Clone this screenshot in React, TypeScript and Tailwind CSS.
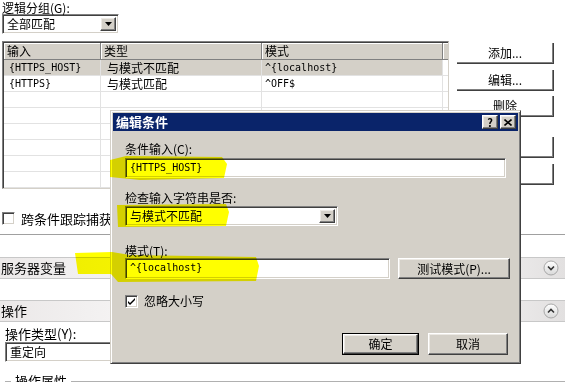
import React from 'react';

const ui = "font-['Noto_Sans_CJK_SC',sans-serif]";
const mono = "font-['DejaVu_Sans_Mono','Noto_Sans_CJK_SC',monospace] text-[10px]";

const raised =
  'border border-t-white border-l-white border-b-[#404040] border-r-[#404040] shadow-[inset_-1px_-1px_0_#808080,inset_1px_1px_0_#ece9e4] bg-[#d4d0c8]';
const sunken =
  'border border-t-[#808080] border-l-[#808080] border-b-white border-r-white shadow-[inset_1px_1px_0_#404040,inset_-1px_-1px_0_#d4d0c8]';

function Arrow() {
  return (
    <svg width="7" height="4" viewBox="0 0 7 4">
      <path d="M0 0h7L3.5 4z" fill="#000" />
    </svg>
  );
}

function Combo({ value, className }: { value: string; className: string }) {
  return (
    <div className={`${sunken} bg-white flex items-stretch p-[2px] ${className}`}>
      <div className="flex-1 pl-[2px] flex items-center whitespace-nowrap">{value}</div>
      <div className={`${raised} w-[16px] flex items-center justify-center`}>
        <Arrow />
      </div>
    </div>
  );
}

function FlatButton({ label }: { label: string }) {
  return (
    <div className="w-[97px] h-[21px] border-r border-b border-[#404040] shadow-[inset_-1px_-1px_0_#808080] bg-white flex items-center justify-center">
      {label}
    </div>
  );
}

function Expander({ up }: { up?: boolean }) {
  return (
    <svg width="16" height="16" viewBox="0 0 16 16">
      <defs>
        <linearGradient id={up ? 'gu' : 'gd'} x1="0" y1="0" x2="0" y2="1">
          <stop offset="0" stopColor="#ffffff" />
          <stop offset="1" stopColor="#d8d8d8" />
        </linearGradient>
      </defs>
      <circle cx="8" cy="8" r="7" fill={`url(#${up ? 'gu' : 'gd'})`} stroke="#a8a8a8" />
      <path
        d={up ? 'M5 9.5L8 6.5L11 9.5' : 'M5 6.5L8 9.5L11 6.5'}
        fill="none"
        stroke="#333"
        strokeWidth="1.6"
      />
    </svg>
  );
}

function SectionHeader({ title, up }: { title: string; up?: boolean }) {
  return (
    <div className="h-[22px] border-t border-b border-[#c8c8c8] bg-[linear-gradient(90deg,#ebe8e8_0%,#ffffff_45%,#ffffff_70%,#e2e0e0_100%)] flex items-center justify-between pl-[1px] pr-[6px]">
      <span className="text-[13px]">{title}</span>
      <Expander up={up} />
    </div>
  );
}

const rows = [
  { input: '{HTTPS_HOST}', type: '与模式不匹配', pattern: '^{localhost}', selected: true },
  { input: '{HTTPS}', type: '与模式匹配', pattern: '^OFF$' },
  {}, {}, {}, {}, {}, {},
] as { input?: string; type?: string; pattern?: string; selected?: boolean }[];

function ConditionTable() {
  return (
    <div className="mt-[7px] w-[447px] border border-t-[#808080] border-l-[#808080] border-b-[#d4d0c8] border-r-[#d4d0c8] shadow-[inset_1px_1px_0_#404040]">
      <div className="flex h-[17px] bg-[#d4d0c8] ml-[1px] mt-[1px] border-b border-[#808080]">
        {[
          ['输入', 'w-[97px]'],
          ['类型', 'w-[161px]'],
          ['模式', 'w-[181px]'],
        ].map(([t, w]) => (
          <div key={t} className={`${w} border-r border-[#808080] shadow-[inset_1px_1px_0_#fff] pl-[3px] leading-[16px]`}>
            {t}
          </div>
        ))}
        <div className="flex-1 shadow-[inset_1px_1px_0_#fff]" />
      </div>
      {rows.map((r, i) => (
        <div key={i} className={`flex h-[16px] ml-[1px] border-b border-[#e2e2e2] ${r.selected ? 'bg-[#d4d0c8]' : ''}`}>
          <div className={`w-[97px] border-r border-[#e2e2e2] pl-[5px] leading-[15px] ${mono}`}>{r.input}</div>
          <div className="w-[161px] border-r border-[#e2e2e2] pl-[6px] leading-[15px]">{r.type}</div>
          <div className={`w-[181px] border-r border-[#e2e2e2] pl-[3px] leading-[15px] ${mono}`}>{r.pattern}</div>
          <div className="flex-1 bg-white" />
        </div>
      ))}
    </div>
  );
}

function Checkbox({ checked }: { checked?: boolean }) {
  return (
    <div className={`${sunken} w-[13px] h-[13px] bg-white flex items-center justify-center`}>
      {checked && (
        <svg width="7" height="7" viewBox="0 0 7 7">
          <path d="M0 3l2 2 5-5v2L2 7 0 5z" fill="#000" />
        </svg>
      )}
    </div>
  );
}

function EditDialog() {
  return (
    <div className="absolute left-[110px] top-[110px] w-[411px] h-[254px] bg-[#d4d0c8] border border-t-[#d4d0c8] border-l-[#d4d0c8] border-b-[#404040] border-r-[#404040] shadow-[inset_1px_1px_0_#fff,inset_-1px_-1px_0_#808080] p-[2px]">
      <div className="h-[18px] bg-[#0a246a] flex items-center justify-between pl-[3px] pr-[2px]">
        <span className="text-white font-bold text-[13px] leading-[16px]">编辑条件</span>
        <div className="flex gap-[2px]">
          <div className={`${raised} w-[16px] h-[14px] flex items-center justify-center text-[11px] font-bold leading-none`}>?</div>
          <div className={`${raised} w-[16px] h-[14px] flex items-center justify-center`}>
            <svg width="8" height="7" viewBox="0 0 8 7">
              <path d="M0.5 0.5L7.5 6.5M7.5 0.5L0.5 6.5" stroke="#000" strokeWidth="1.6" />
            </svg>
          </div>
        </div>
      </div>
      <div className="pl-[12px]">
        <div className="mt-[11px] h-[14px] leading-[14px]">条件输入(C):</div>
        <div className={`${sunken} mt-[2px] w-[381px] h-[20px] bg-white pl-[4px] leading-[17px] ${mono}`}>{'{HTTPS_HOST}'}</div>
        <div className="mt-[13px] h-[14px] leading-[14px]">检查输入字符串是否:</div>
        <Combo value="与模式不匹配" className="mt-[1px] w-[213px] h-[20px]" />
        <div className="mt-[18px] h-[14px] leading-[14px]">模式(T):</div>
        <div className="flex items-center">
          <div className={`${sunken} w-[265px] h-[21px] bg-white pl-[4px] leading-[18px] ${mono}`}>^{'{localhost}'}</div>
          <div className={`${raised} ml-[8px] w-[112px] h-[21px] flex items-center justify-center`}>测试模式(P)...</div>
        </div>
        <div className="mt-[13px] flex items-center gap-[6px]">
          <Checkbox checked />
          <span>忽略大小写</span>
        </div>
        <div className="mt-[23px] flex justify-end pr-[10px] gap-[9px]">
          <div className="border border-black">
            <div className={`${raised} w-[75px] h-[20px] flex items-center justify-center`}>确定</div>
          </div>
          <div className={`${raised} w-[80px] h-[22px] flex items-center justify-center`}>取消</div>
        </div>
      </div>
    </div>
  );
}

export default function App() {
  return (
    <div className={`relative w-[565px] h-[382px] overflow-hidden bg-white text-[12px] text-black ${ui}`}>
      <div className="flex">
        <div className="w-[457px] pl-[2px]">
          <div className="leading-[13px] pt-px">逻辑分组(G):</div>
          <Combo value="全部匹配" className="w-[117px] h-[20px]" />
          <ConditionTable />
        </div>
        <div className="pt-[43px] flex flex-col">
          <FlatButton label="添加..." />
          <div className="mt-[6px]"><FlatButton label="编辑..." /></div>
          <div className="mt-[5px]"><FlatButton label="删除" /></div>
          <div className="mt-[20px]"><FlatButton label="上移" /></div>
          <div className="mt-[6px]"><FlatButton label="下移" /></div>
        </div>
      </div>
      <div className="mt-[23px] pl-[2px] flex items-center gap-[6px] h-[13px]">
        <Checkbox />
        <span className="text-[13px]">跨条件跟踪捕获组</span>
      </div>
      <div className="mt-[9px] border-t border-[#a0a0a0]" />
      <div className="mt-[22px]">
        <SectionHeader title="服务器变量" />
      </div>
      <div className="mt-[21px]">
        <SectionHeader title="操作" up />
      </div>
      <div className="pl-[5px]">
        <div className="mt-[4px] h-[15px] leading-[15px] text-[13px]">操作类型(Y):</div>
        <Combo value="重定向" className="mt-[1px] w-[320px] h-[20px]" />
        <div className="mt-[12px] flex items-center">
          <div className="w-[6px] border-t border-[#b0b0b0]" />
          <span className="px-[4px] text-[13px] leading-[14px]">操作属性</span>
          <div className="flex-1 border-t border-[#b0b0b0]" />
        </div>
      </div>
      <EditDialog />
      <svg className="absolute inset-0 pointer-events-none mix-blend-multiply" width="565" height="382" viewBox="0 0 565 382">
        <path d="M110 160 L126 156 L222 157 L227 164 L224 178 L140 180 L110 177 Z" fill="#ffff00" />
        <path d="M117 205 L226 204 L229 212 L226 226 L118 227 Z" fill="#ffff00" />
        <path d="M75 253 L112 252 L130 255 L256 257 L259 266 L256 281 L118 282 L111 274 L78 274 Z" fill="#ffff00" />
      </svg>
    </div>
  );
}
